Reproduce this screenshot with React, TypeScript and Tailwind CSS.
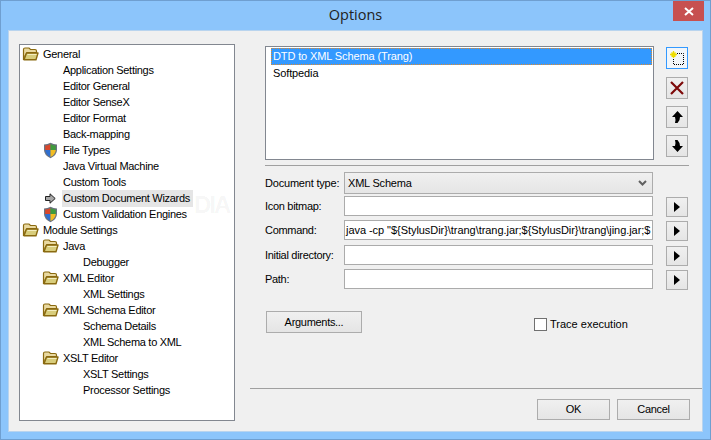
import React from "react";

const Folder = () => (
  <svg width="17" height="14" viewBox="0 0 17 14" className="block">
    <path d="M1.5 12.5 V2.5 Q1.5 1 3 1 H7 L8.5 2.5 H13 Q14.5 2.5 14.5 4 V5.5 H5 L3 9 V12.5 Z" fill="#e9d9a0" stroke="#8a6a10" strokeWidth="1.2" />
    <path d="M2 12.8 L4.5 6 H16 L14 12.8 Z" fill="#d8cd7c" stroke="#8a6a10" strokeWidth="1.4" strokeLinejoin="round" />
    <path d="M5.5 7.5 H14.5" stroke="#f4eec0" strokeWidth="1" />
  </svg>
);

const Shield = () => (
  <svg width="15" height="17" viewBox="0 0 15 17" className="block">
    <path d="M7.5 0.7 Q10.5 2.5 14 2.5 V8 Q14 13 7.5 16.3 Q1 13 1 8 V2.5 Q4.5 2.5 7.5 0.7 Z" fill="#6b7280" />
    <path d="M7.5 2 V8 H2.2 V3.6 Q5 3.5 7.5 2 Z" fill="#d9472b" />
    <path d="M7.5 2 V8 H12.8 V3.6 Q10 3.5 7.5 2 Z" fill="#3f9b3c" />
    <path d="M2.2 8 H7.5 V15 Q2.6 12.5 2.2 8 Z" fill="#2f6fd0" />
    <path d="M12.8 8 H7.5 V15 Q12.4 12.5 12.8 8 Z" fill="#f2bd22" />
  </svg>
);

const TreeArrow = () => (
  <svg width="11" height="11" viewBox="0 0 11 11" className="block">
    <path d="M0.5 3.5 H5 V0.8 L10.2 5.5 L5 10.2 V7.5 H0.5 Z" fill="#a8a8a8" stroke="#222" strokeWidth="1" />
  </svg>
);

type Row = { t: string; l: 0 | 1 | 2; i?: "folder" | "shield" | "arrow"; sel?: boolean };

const rows: Row[] = [
  { t: "General", l: 0, i: "folder" },
  { t: "Application Settings", l: 1 },
  { t: "Editor General", l: 1 },
  { t: "Editor SenseX", l: 1 },
  { t: "Editor Format", l: 1 },
  { t: "Back-mapping", l: 1 },
  { t: "File Types", l: 1, i: "shield" },
  { t: "Java Virtual Machine", l: 1 },
  { t: "Custom Tools", l: 1 },
  { t: "Custom Document Wizards", l: 1, i: "arrow", sel: true },
  { t: "Custom Validation Engines", l: 1, i: "shield" },
  { t: "Module Settings", l: 0, i: "folder" },
  { t: "Java", l: 1, i: "folder" },
  { t: "Debugger", l: 2 },
  { t: "XML Editor", l: 1, i: "folder" },
  { t: "XML Settings", l: 2 },
  { t: "XML Schema Editor", l: 1, i: "folder" },
  { t: "Schema Details", l: 2 },
  { t: "XML Schema to XML", l: 2 },
  { t: "XSLT Editor", l: 1, i: "folder" },
  { t: "XSLT Settings", l: 2 },
  { t: "Processor Settings", l: 2 },
];

const indent = ["pl-[1px]", "pl-[21px]", "pl-[41px]"];

const TreeRow = ({ r }: { r: Row }) => (
  <div className={`flex h-4 items-center ${indent[r.l]}`}>
    <span className="flex h-4 w-[18px] shrink-0 items-center justify-center">
      {r.i === "folder" && <Folder />}
      {r.i === "shield" && <Shield />}
      {r.i === "arrow" && <TreeArrow />}
    </span>
    <span className={`ml-[3px] flex h-[17px] items-center px-[1px] whitespace-nowrap ${r.sel ? "bg-[#e5e5e5] pr-[3px]" : ""}`}>{r.t}</span>
  </div>
);

const ToolButton = ({ focus, className, children }: { focus?: boolean; className?: string; children: React.ReactNode }) => (
  <div
    className={`flex h-[22px] w-[22px] items-center justify-center border ${
      focus ? "border-[#3399ff] bg-[#f2f6fa]" : "border-[#acacac] bg-gradient-to-b from-[#f0f0f0] to-[#e5e5e5]"
    } ${className ?? ""}`}
  >
    {children}
  </div>
);

const Play = () => (
  <svg width="8" height="10" viewBox="0 0 8 10" className="block">
    <path d="M1 0 L7 5 L1 10 Z" fill="#000" />
  </svg>
);

const Field = ({ label, value, className }: { label: string; value?: string; className?: string }) => (
  <div className={`flex h-[21px] items-start ${className ?? ""}`}>
    <span className="w-[79px] shrink-0 pt-[5px] whitespace-nowrap">{label}</span>
    <div className="flex h-[20px] w-[309px] items-center overflow-hidden border border-[#ababab] bg-white pl-[1px] tracking-[-0.05px] whitespace-nowrap">
      {value}
    </div>
    <div className="mt-[1px] ml-[13px] flex h-[20px] w-[22px] items-center justify-center border border-[#acacac] bg-gradient-to-b from-[#f0f0f0] to-[#e5e5e5]">
      <Play />
    </div>
  </div>
);

const DialogButton = ({ label, className }: { label: string; className?: string }) => (
  <div className={`flex items-center justify-center border border-[#acacac] bg-gradient-to-b from-[#f0f0f0] to-[#e5e5e5] ${className ?? ""}`}>{label}</div>
);

export default function App() {
  return (
    <div className="relative flex h-[440px] w-[711px] flex-col overflow-hidden border border-[#6f9fd0] bg-[#8cc5fb] font-['Liberation_Sans',Arial,sans-serif] text-[11px] leading-none tracking-[-0.3px] text-black">
      <div className="flex h-[29px] shrink-0 items-center justify-center font-['Open_Sans',sans-serif] text-[14.5px] tracking-normal text-[#222]">Options</div>
      <div className="absolute top-0 right-[6px] flex h-[20px] w-[31px] items-center justify-center bg-[#c75050]">
        <svg width="10" height="9" viewBox="0 0 10 9">
          <path d="M1 1 L9 8 M9 1 L1 8" stroke="#fff" strokeWidth="2" />
        </svg>
      </div>
      <div className="mx-[7px] flex h-[402px] w-[695px] shrink-0 flex-col border border-[#b9d4ee] bg-[#f0f0f0]">
        <div className="flex h-[357px] shrink-0">
          <div className="mt-[13px] ml-[10px] h-[377px] w-[216px] shrink-0 border border-[#828790] bg-white pt-[1px]">
            {rows.map((r) => (
              <TreeRow key={r.t} r={r} />
            ))}
          </div>
          <div className="ml-[30px] flex w-[424px] shrink-0 flex-col pt-[15px]">
            <div className="flex">
              <div className="h-[114px] w-[389px] shrink-0 border border-[#828790] bg-white pt-[1px] pr-[1px] pl-[5px] tracking-[-0.12px]">
                <div className="flex h-[17px] items-center border border-dotted border-[#e08a2e] bg-[#3399ff] pl-[1px] text-white">DTD to XML Schema (Trang)</div>
                <div className="flex h-[17px] items-center pl-[2px]">Softpedia</div>
              </div>
              <div className="ml-[12px] flex flex-col pt-[1px]">
                <ToolButton focus>
                  <svg width="15" height="15" viewBox="0 0 15 15">
                    <path d="M7 2.5 H13.5 V13.5 H3.5 V7.5" fill="none" stroke="#000" strokeWidth="1" strokeDasharray="1 1" />
                    <path d="M3.5 0 V7 M0 3.5 H7 M1.5 1.5 L5.5 5.5 M5.5 1.5 L1.5 5.5" stroke="#eedc00" strokeWidth="1.3" />
                  </svg>
                </ToolButton>
                <ToolButton className="mt-[8px]">
                  <svg width="14" height="14" viewBox="0 0 14 14">
                    <path d="M1 1 L13 13 M13 1 L1 13" stroke="#7e0a0a" strokeWidth="2.2" />
                  </svg>
                </ToolButton>
                <ToolButton className="mt-[7px]">
                  <svg width="11" height="12" viewBox="0 0 11 12">
                    <path d="M5.5 0 L11 6 H8 L7.5 9 L5.5 12 H3 L3.5 9 L3 6 H0 Z" fill="#000" />
                  </svg>
                </ToolButton>
                <ToolButton className="mt-[7px]">
                  <svg width="11" height="12" viewBox="0 0 11 12">
                    <path d="M5.5 12 L11 6 H8 L7.5 3 L5.5 0 H3 L3.5 3 L3 6 H0 Z" fill="#000" />
                  </svg>
                </ToolButton>
              </div>
            </div>
            <div className="mt-[5px] h-[2px] w-[424px] border-t border-[#a0a0a0] border-b-white" />
            <div className="mt-[5px] flex h-[22px] items-center tracking-[-0.2px]">
              <span className="w-[79px] shrink-0 whitespace-nowrap">Document type:</span>
              <div className="flex h-[22px] w-[309px] items-center justify-between border border-[#acacac] bg-gradient-to-b from-[#f0f0f0] to-[#e5e5e5] pr-[5px] pl-[3px]">
                XML Schema
                <svg width="9" height="6" viewBox="0 0 9 6">
                  <path d="M1 1 L4.5 4.5 L8 1" fill="none" stroke="#606060" strokeWidth="2" />
                </svg>
              </div>
            </div>
            <Field label="Icon bitmap:" className="mt-[2px]" />
            <Field label="Command:" className="mt-[3px]" value={'java -cp "${StylusDir}\\trang\\trang.jar;${StylusDir}\\trang\\jing.jar;$'} />
            <Field label="Initial directory:" className="mt-[4px]" />
            <Field label="Path:" className="mt-[3px]" />
            <div className="mt-[21px] flex items-start">
              <DialogButton label="Arguments..." className="ml-[1px] h-[22px] w-[96px]" />
              <div className="mt-[7px] ml-[172px] h-[13px] w-[13px] border border-[#707070] bg-white" />
              <span className="mt-[8px] ml-[3px] tracking-normal whitespace-nowrap">Trace execution</span>
            </div>
          </div>
        </div>
        <div className="ml-[241px] h-[2px] border-t border-[#a0a0a0] border-b-white" />
        <div className="flex justify-end pt-[9px] pr-[12px]">
          <DialogButton label="OK" className="h-[21px] w-[73px]" />
          <DialogButton label="Cancel" className="ml-[7px] h-[21px] w-[73px]" />
        </div>
      </div>
      <div className="pointer-events-none absolute top-[192px] left-[193px] text-[24px] font-bold tracking-[-2px] whitespace-nowrap text-black/[0.05]">DIA</div>
    </div>
  );
}
